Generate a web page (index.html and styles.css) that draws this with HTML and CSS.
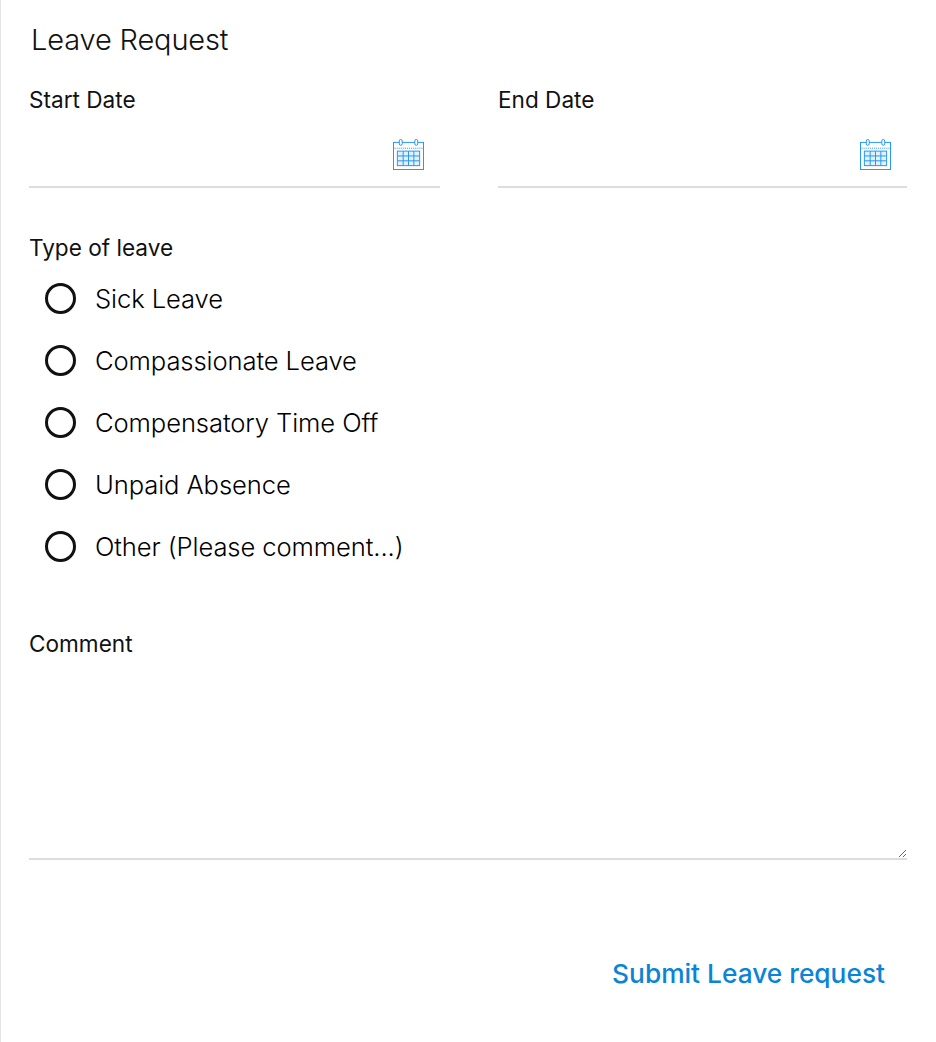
FILE: index.html
```html
<!DOCTYPE html>
<html lang="en">
<head>
    <meta charset="UTF-8">
    <title>Leave Request</title>
    <link rel="stylesheet" href="styles.css">
</head>
<body>
    <div class="form-container">
        <h1>Leave Request</h1>
        <div class="date-row">
            <div class="date-field">
                <label class="field-label">Start Date</label>
                <div class="date-input">
                    <svg class="calendar-icon" viewBox="0 0 32 32" fill="none" stroke="#2196f3">
                        <rect x="0.5" y="3.5" width="31" height="28"/>
                        <line x1="0.5" y1="9.5" x2="31.5" y2="9.5" stroke-dasharray="1 1"/>
                        <rect x="6.5" y="0.5" width="3" height="6" rx="1.5" fill="#fff"/>
                        <rect x="22.5" y="0.5" width="3" height="6" rx="1.5" fill="#fff"/>
                        <rect x="4.5" y="12.5" width="23" height="15" fill="#e3f1fc"/>
                        <path d="M4.5 17.5h23M4.5 22.5h23M10.5 12.5v15M16 12.5v15M21.5 12.5v15"/>
                    </svg>
                </div>
            </div>
            <div class="date-field">
                <label class="field-label">End Date</label>
                <div class="date-input">
                    <svg class="calendar-icon" viewBox="0 0 32 32" fill="none" stroke="#2196f3">
                        <rect x="0.5" y="3.5" width="31" height="28"/>
                        <line x1="0.5" y1="9.5" x2="31.5" y2="9.5" stroke-dasharray="1 1"/>
                        <rect x="6.5" y="0.5" width="3" height="6" rx="1.5" fill="#fff"/>
                        <rect x="22.5" y="0.5" width="3" height="6" rx="1.5" fill="#fff"/>
                        <rect x="4.5" y="12.5" width="23" height="15" fill="#e3f1fc"/>
                        <path d="M4.5 17.5h23M4.5 22.5h23M10.5 12.5v15M16 12.5v15M21.5 12.5v15"/>
                    </svg>
                </div>
            </div>
        </div>

        <div class="leave-type">
            <div class="field-label">Type of leave</div>
            <div class="radio-list">
                <div class="radio-row"><span class="radio-circle"></span>Sick Leave</div>
                <div class="radio-row"><span class="radio-circle"></span>Compassionate Leave</div>
                <div class="radio-row"><span class="radio-circle"></span>Compensatory Time Off</div>
                <div class="radio-row"><span class="radio-circle"></span>Unpaid Absence</div>
                <div class="radio-row"><span class="radio-circle"></span>Other (Please comment...)</div>
            </div>
        </div>

        <div class="comment">
            <label class="field-label">Comment</label>
            <textarea class="comment-input"></textarea>
        </div>

        <div class="actions">
            <a class="submit-link" href="#">Submit Leave request</a>
        </div>
    </div>
</body>
</html>
```

FILE: styles.css
```css
html, body {
    margin: 0;
    padding: 0;
    background: #fff;
}

body {
    font-family: Inter, "Liberation Sans", sans-serif;
    color: #111;
    height: 1042px;
    overflow: hidden;
}

.form-container {
    box-sizing: border-box;
    height: 1042px;
    padding: 0 29px 0 28px;
    border-left: 1px solid #e4e4e4;
}

h1 {
    margin: 0;
    padding: 23px 0 0 2px;
    font-size: 29px;
    line-height: 34px;
    font-weight: 300;
    letter-spacing: -0.15px;
}

.field-label {
    display: block;
    font-size: 22.6px;
    line-height: 26px;
    font-weight: 400;
}

.date-row {
    display: grid;
    grid-template-columns: 411px 409px;
    column-gap: 58px;
    margin-top: 30px;
}

.date-input {
    display: flex;
    justify-content: flex-end;
    height: 75px;
    padding-right: 16px;
    box-sizing: border-box;
    border-bottom: 2px solid #ddd;
}

.calendar-icon {
    width: 31px;
    height: 31px;
    margin-top: 26px;
}

.leave-type {
    margin-top: 47px;
}

.radio-list {
    margin-top: 6px;
}

.radio-row {
    display: flex;
    align-items: center;
    height: 62px;
    padding-left: 16px;
    font-size: 25.6px;
    font-weight: 300;
    letter-spacing: -0.1px;
    color: #000;
}

.radio-circle {
    box-sizing: border-box;
    width: 31px;
    height: 31px;
    margin-right: 19px;
    border: 3px solid #111;
    border-radius: 50%;
}

.comment {
    margin-top: 54px;
}

.comment-input {
    display: block;
    box-sizing: border-box;
    width: 100%;
    height: 203px;
    padding: 0;
    border: none;
    border-bottom: 2px solid #ddd;
    outline: none;
    resize: vertical;
}

.actions {
    display: flex;
    justify-content: flex-end;
    padding: 98px 22px 0 0;
}

.submit-link {
    color: #0a84d6;
    font-size: 26.3px;
    line-height: 32px;
    font-weight: 500;
    text-decoration: none;
}
```
